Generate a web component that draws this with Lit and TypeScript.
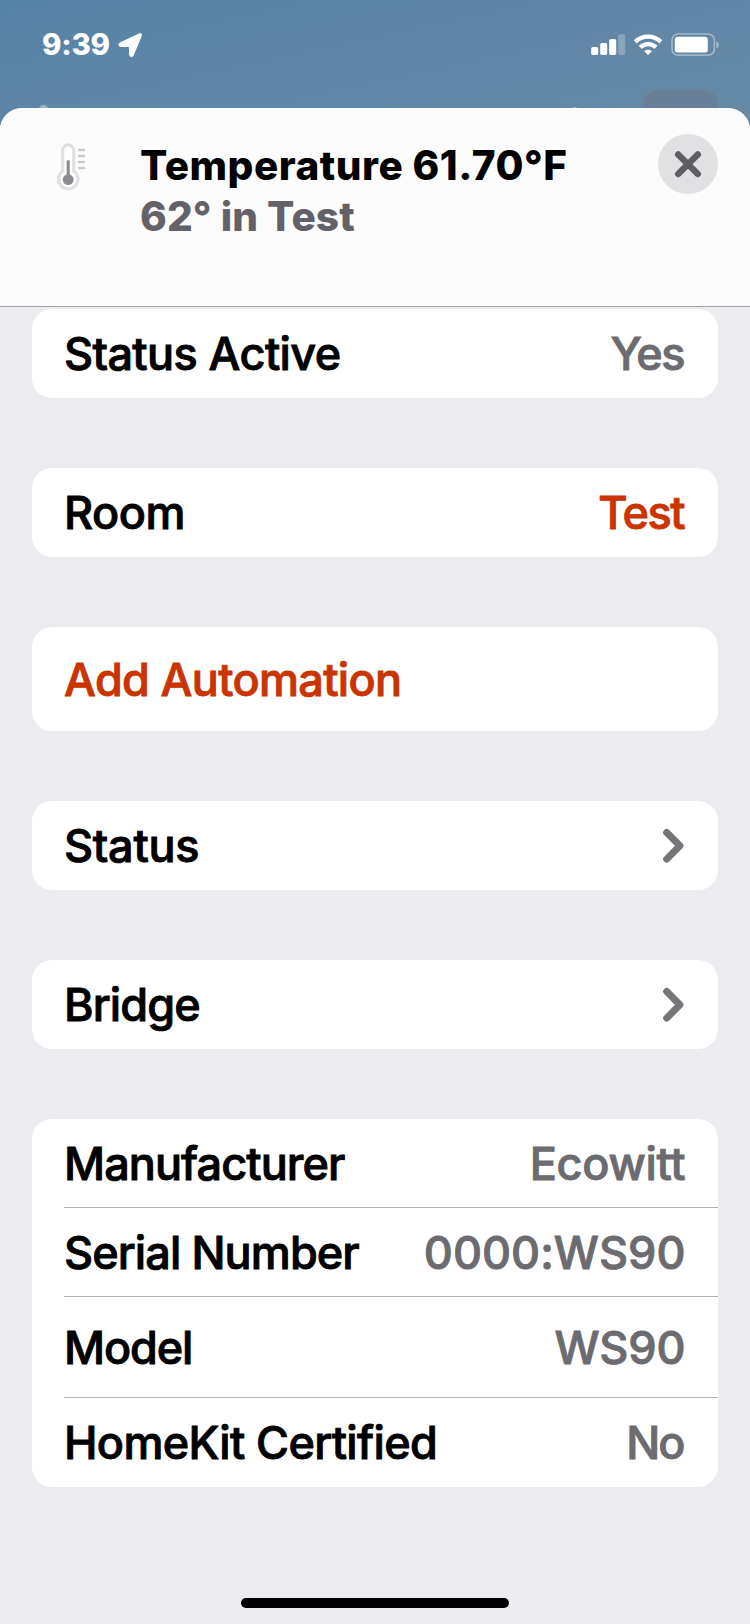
import { LitElement, html, css, nothing } from 'lit';
import { customElement, property } from 'lit/decorators.js';
import { styleMap } from 'lit/directives/style-map.js';
import { classMap } from 'lit/directives/class-map.js';

interface Label {
  text: string;
  tracking: number;
}

interface Row {
  label: Label;
  value?: Label;
  accentLabel?: boolean;
  accentValue?: boolean;
  chevron?: boolean;
  size?: 'tall' | 'medium';
}

const t = (text: string, tracking: number): Label => ({ text, tracking });

const GROUPS: Row[][] = [
  [{ label: t('Status Active', -0.6), value: t('Yes', -1.5) }],
  [{ label: t('Room', -0.5), value: t('Test', -1.5), accentValue: true }],
  [{ label: t('Add Automation', -0.66), accentLabel: true, size: 'tall' }],
  [{ label: t('Status', -0.25), chevron: true }],
  [{ label: t('Bridge', -0.85), chevron: true }],
  [
    { label: t('Manufacturer', -0.91), value: t('Ecowitt', -0.3) },
    { label: t('Serial Number', -0.89), value: t('0000:WS90', 0.04) },
    { label: t('Model', -1.1), value: t('WS90', -0.15), size: 'medium' },
    { label: t('HomeKit Certified', -0.65), value: t('No', -1.9) },
  ],
];

@customElement('status-bar')
class StatusBar extends LitElement {
  static styles = css`
    :host {
      display: flex;
      justify-content: space-between;
      height: 108px;
      box-sizing: border-box;
      padding: 30px 30px 0 42px;
      color: #fff;
    }
    .time {
      display: flex;
      height: 29px;
      align-items: center;
      font-size: 29.5px;
      font-weight: 800;
      letter-spacing: -0.26px;
      line-height: 29px;
    }
    .location {
      margin-left: 7px;
    }
    .icons {
      display: block;
    }
  `;
  render() {
    return html`
      <div class="time">
        <span>9:39</span>
        <svg class="location" width="26" height="28" viewBox="117 31 26 28">
          <path d="M140.2 35 L120.6 44.2 Q119.9 45 121 45.1 L130.6 45.3 L130.9 54.6 Q131.2 55.8 132 54.8 Z"
            fill="#fff" stroke="#fff" stroke-width="3.6" stroke-linejoin="round" />
        </svg>
      </div>
      <svg class="icons" width="130" height="29" viewBox="590 30 130 29" fill="#fff">
        <rect x="591.2" y="47" width="7" height="8" rx="1.8" />
        <rect x="600.2" y="43" width="7" height="12" rx="1.8" />
        <rect x="609.2" y="39" width="7" height="16" rx="1.8" />
        <rect x="618.2" y="34.2" width="7" height="20.8" rx="1.8" opacity=".25" />
        <g fill="none" stroke="#fff" stroke-width="4.3">
          <path d="M635.3 41.9 A18.3 18.3 0 0 1 660.9 41.9" />
          <path d="M640.2 47.3 A11.2 11.2 0 0 1 656 47.3" />
        </g>
        <path d="M648.1 55 L644.3 51.2 A5.6 5.6 0 0 1 651.9 51.2 Z" />
        <rect x="672" y="34" width="42.3" height="21.2" rx="6" fill="none" stroke="#fff" stroke-width="1.7" opacity=".4" />
        <rect x="674.8" y="36.8" width="33" height="15.8" rx="3.2" />
        <path d="M716.4 41.3 C719.6 42.3 719.6 47.3 716.4 48.3 Z" opacity=".45" />
      </svg>
    `;
  }
}

@customElement('sheet-header')
class SheetHeader extends LitElement {
  static styles = css`
    :host {
      display: flex;
      height: 199px;
      box-sizing: border-box;
      padding: 26px 32px 0 55px;
      background: #fcfcfc;
      border-bottom: 1px solid #a2a1a8;
    }
    .thermometer {
      margin-top: 7px;
    }
    .titles {
      flex: 1;
      margin: 6px 0 0 53px;
      font-size: 40.5px;
      line-height: 51px;
      font-weight: 800;
      white-space: nowrap;
    }
    .title {
      letter-spacing: 0.5px;
      color: #000;
    }
    .subtitle {
      letter-spacing: 0.12px;
      color: #636268;
    }
    .close {
      width: 60px;
      height: 60px;
    }
  `;
  render() {
    return html`
      <svg class="thermometer" width="32" height="52" viewBox="55 141 32 52">
        <path d="M62.7 170.6 V149.8 A5.5 5.5 0 0 1 73.7 149.8 V170.6 A9.7 9.7 0 1 1 62.7 170.6 Z"
          transform="translate(0 0.6)" fill="#fff" stroke="#e0e0e2" stroke-width="3.2" />
        <path d="M68.2 161.5 V178" stroke="#8e8d93" stroke-width="3.2" stroke-linecap="round" />
        <circle cx="68.2" cy="179.6" r="5.4" fill="#8e8d93" />
        <path d="M79 150 H84 M79 156 H84 M79 162 H84 M79 168 H84" stroke="#cbcbce" stroke-width="2.4" stroke-linecap="round" />
      </svg>
      <div class="titles">
        <div class="title">Temperature 61.70°F</div>
        <div class="subtitle">62° in Test</div>
      </div>
      <svg class="close" viewBox="0 0 60 60">
        <circle cx="30" cy="30" r="30" fill="#e1e1e3" />
        <path d="M20.2 20.4 L39.8 40 M39.8 20.4 L20.2 40" stroke="#5f5e65" stroke-width="6.4" stroke-linecap="round" />
      </svg>
    `;
  }
}

@customElement('settings-group')
class SettingsGroup extends LitElement {
  @property({ attribute: false }) rows: Row[] = [];

  static styles = css`
    :host {
      display: block;
      background: #fff;
      border-radius: 20px;
      padding-left: 32px;
    }
    .row {
      display: flex;
      align-items: center;
      justify-content: space-between;
      box-sizing: border-box;
      height: 89px;
      padding-right: 32px;
      font-size: 45px;
      font-weight: 500;
      line-height: 56px;
      white-space: nowrap;
      -webkit-text-stroke-width: 0.9px;
    }
    .row:not(:last-child) {
      padding-top: 2px;
      border-bottom: 1px solid #b4b4b6;
    }
    .medium {
      height: 101px;
    }
    .tall {
      height: 104px;
      padding-top: 2px;
    }
    .label {
      color: #000;
    }
    .value {
      color: #6c6b70;
    }
    .label.accent,
    .value.accent {
      color: #c93400;
    }
    .chevron {
      display: block;
      margin-right: 2px;
    }
  `;
  private text(l: Label, kind: 'label' | 'value', accent = false) {
    // Tracking also trails the last glyph, so values give it back at the right edge.
    const styles: Record<string, string> = { letterSpacing: `${l.tracking}px` };
    if (kind === 'value') styles.marginRight = `${Math.max(0, -l.tracking) + 0.5}px`;
    return html`<span class=${classMap({ [kind]: true, accent })} style=${styleMap(styles)}>${l.text}</span>`;
  }
  render() {
    return this.rows.map(
      (r) => html`<div class="row ${r.size ?? ''}">
        ${this.text(r.label, 'label', r.accentLabel)}
        ${r.value ? this.text(r.value, 'value', r.accentValue) : nothing}
        ${r.chevron
          ? html`<svg class="chevron" width="22" height="36" viewBox="0 0 22 36">
              <path d="M4.7 4.5 L17.9 17.8 L4.7 31.1" fill="none" stroke="#76757a" stroke-width="7"
                stroke-linecap="round" stroke-linejoin="round" />
            </svg>`
          : nothing}
      </div>`,
    );
  }
}

@customElement('app-root')
class AppRoot extends LitElement {
  static styles = css`
    :host {
      display: flex;
      flex-direction: column;
      position: relative;
      height: 1624px;
      overflow: hidden;
      font-family: Inter, 'Liberation Sans', sans-serif;
      background: linear-gradient(168deg, #5583a7 0, #5c85a9 100px, #6387a6 180px, #6689a5 260px);
    }
    .behind {
      position: absolute;
      left: 0;
      top: 0;
    }
    .bar {
      position: relative;
    }
    .sheet {
      position: relative;
      flex: 1;
      display: flex;
      flex-direction: column;
      border-radius: 22px 22px 0 0;
      overflow: hidden;
      background: #ebebf0;
    }
    .list {
      display: flex;
      flex-direction: column;
      gap: 70px;
      padding: 2px 32px 0;
    }
    .home {
      width: 268px;
      height: 10px;
      margin: auto auto 16px;
      border-radius: 5px;
      background: #000;
    }
  `;
  render() {
    return html`
      <svg class="behind" width="750" height="130" viewBox="0 0 750 130">
        <circle cx="43.5" cy="110" r="5" fill="#a0b1c0" />
        <circle cx="575" cy="109.5" r="2.6" fill="#a9bac8" />
        <rect x="643" y="90" width="75" height="60" rx="15" fill="#697f97" />
      </svg>
      <status-bar class="bar"></status-bar>
      <div class="sheet">
        <sheet-header></sheet-header>
        <div class="list">
          ${GROUPS.map((rows) => html`<settings-group .rows=${rows}></settings-group>`)}
        </div>
        <div class="home"></div>
      </div>
    `;
  }
}
